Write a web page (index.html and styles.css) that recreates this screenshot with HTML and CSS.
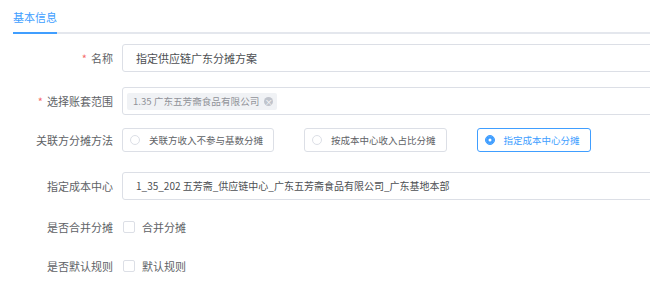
FILE: index.html
```html
<!DOCTYPE html>
<html lang="zh-CN">
<head>
    <meta charset="UTF-8">
    <meta name="viewport" content="width=device-width, initial-scale=1.0">
    <title>基本信息</title>
    <link rel="stylesheet" href="styles.css">
</head>
<body>
    <div class="tabs">
        <div class="tab active">基本信息</div>
    </div>
    <form class="form">
        <div class="form-item">
            <label class="label required">名称</label>
            <div class="content">
                <div class="input">指定供应链广东分摊方案</div>
            </div>
        </div>
        <div class="form-item">
            <label class="label required">选择账套范围</label>
            <div class="content">
                <div class="input tags">
                    <span class="tag">1.35 广东五芳斋食品有限公司<i class="tag-close">×</i></span>
                </div>
            </div>
        </div>
        <div class="form-item radio-row">
            <label class="label">关联方分摊方法</label>
            <div class="content radio-group">
                <span class="radio"><i class="dot"></i>关联方收入不参与基数分摊</span>
                <span class="radio"><i class="dot"></i>按成本中心收入占比分摊</span>
                <span class="radio checked"><i class="dot"></i>指定成本中心分摊</span>
            </div>
        </div>
        <div class="form-item">
            <label class="label">指定成本中心</label>
            <div class="content">
                <div class="input small">1_35_202 五芳斋_供应链中心_广东五芳斋食品有限公司_广东基地本部</div>
            </div>
        </div>
        <div class="form-item check-row">
            <label class="label">是否合并分摊</label>
            <div class="content">
                <span class="checkbox"><i class="box"></i>合并分摊</span>
            </div>
        </div>
        <div class="form-item check-row">
            <label class="label">是否默认规则</label>
            <div class="content">
                <span class="checkbox"><i class="box"></i>默认规则</span>
            </div>
        </div>
    </form>
</body>
</html>
```

FILE: styles.css
```css
html {
    overflow: hidden;
}
body {
    margin: 0;
    font-family: "Noto Sans CJK SC", "Noto Sans", sans-serif;
    color: #606266;
    background: #fff;
    width: 700px;
}
.tabs {
    margin-left: 13px;
    border-bottom: 2px solid #e4e7ed;
    display: flex;
}
.tab {
    font-size: 11px;
    padding-top: 2px;
    line-height: 30px;
    margin-bottom: -2px;
    border-bottom: 2px solid transparent;
}
.tab.active {
    color: #409eff;
    border-bottom-color: #409eff;
}
.form {
    margin-top: 10px;
}
.form-item {
    display: flex;
    align-items: center;
    height: 28px;
    margin-bottom: 15px;
}
.label {
    width: 113px;
    padding-right: 9px;
    text-align: right;
    font-size: 11px;
    color: #606266;
    flex-shrink: 0;
}
.label.required::before {
    content: "*";
    color: #f56c6c;
    margin-right: 4px;
}
.content {
    flex: 1;
    display: flex;
    align-items: center;
}
.input {
    flex: 1;
    height: 26px;
    line-height: 26px;
    border: 1px solid #dcdfe6;
    border-radius: 3px;
    padding: 0 13px;
    font-size: 11px;
    color: #4d4f53;
    white-space: nowrap;
}
.input.small {
    font-size: 10px;
}
.input.tags {
    padding: 0 4px;
    display: flex;
    align-items: center;
}
.tag {
    background: #f0f2f5;
    color: #909399;
    font-size: 9.6px;
    height: 17px;
    line-height: 17px;
    padding: 0 4px 0 6px;
    border-radius: 2px;
    display: inline-flex;
    align-items: center;
}
.tag-close {
    font-style: normal;
    width: 9px;
    height: 9px;
    line-height: 9px;
    margin-left: 5px;
    border-radius: 50%;
    background: #c0c4cc;
    color: #fff;
    font-size: 8px;
    text-align: center;
}
.radio-row {
    height: 24px;
    margin-top: -2px;
    margin-bottom: 20px;
}
.radio-group {
    gap: 30px;
}
.radio {
    display: inline-flex;
    align-items: center;
    height: 22px;
    border: 1px solid #dcdfe6;
    border-radius: 3px;
    padding: 0 10px 0 7px;
    font-size: 9.5px;
    color: #606266;
}
.dot {
    width: 8px;
    height: 8px;
    border: 1px solid #dcdfe6;
    border-radius: 50%;
    margin-right: 9px;
    box-sizing: content-box;
}
.radio.checked {
    border-color: #409eff;
    color: #409eff;
}
.radio.checked .dot {
    border-color: #409eff;
    background: #409eff;
    box-shadow: inset 0 0 0 2.5px #409eff, inset 0 0 0 5px #fff;
}
.check-row {
    margin-top: -2px;
    margin-bottom: 13px;
}
.checkbox {
    display: inline-flex;
    align-items: center;
    font-size: 11px;
    color: #606266;
    padding-left: 1px;
}
.box {
    width: 10px;
    height: 10px;
    border: 1px solid #dcdfe6;
    border-radius: 2px;
    margin-right: 7px;
}
```
